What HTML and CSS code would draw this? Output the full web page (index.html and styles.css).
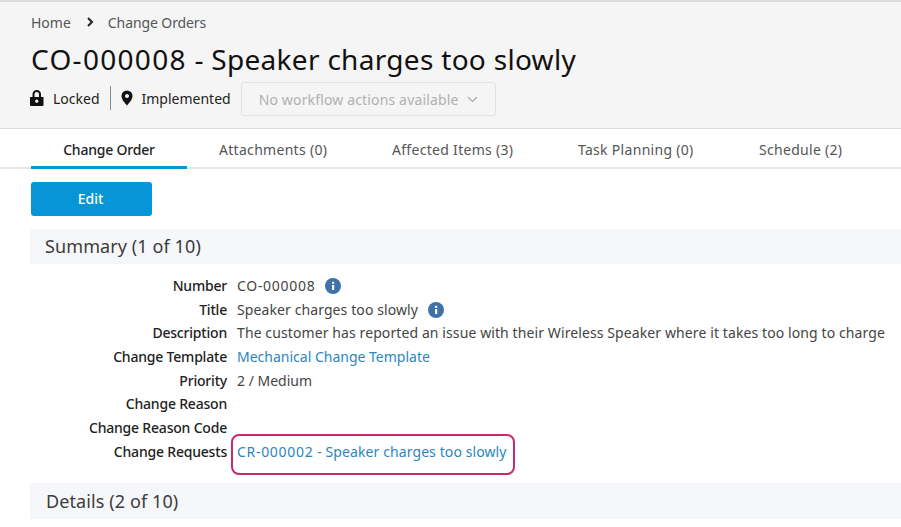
FILE: index.html
```html
<!DOCTYPE html>
<html lang="en">
<head>
<meta charset="utf-8">
<title>CO-000008 - Speaker charges too slowly</title>
<link rel="stylesheet" href="styles.css">
</head>
<body>
<header class="head">
  <nav class="crumbs">
    <span>Home</span>
    <svg class="crumb-sep" width="8" height="10" viewBox="0 0 8 10"><path d="M2 1l4 4-4 4" fill="none" stroke="#222" stroke-width="2"/></svg>
    <span class="crumb-last">Change Orders</span>
  </nav>
  <h1 class="title"><span class="title-id">CO-000008</span> - Speaker charges too slowly</h1>
  <div class="status">
    <svg class="st-icon" width="14" height="16" viewBox="0 0 14 16"><path d="M0 7h13.500v8a1 1 0 0 1-1 1H1a1 1 0 0 1-1-1z" fill="#111"/><path d="M3.500 7.500V4.300a3.250 3.250 0 0 1 6.500 0v3.200" fill="none" stroke="#111" stroke-width="2"/><circle cx="6.750" cy="11.200" r="1.600" fill="#f5f5f5"/></svg>
    <span class="st-text">Locked</span>
    <span class="st-div"></span>
    <svg class="st-icon" width="12" height="16" viewBox="0 0 12 16"><path fill-rule="evenodd" d="M6 .5a5.500 5.500 0 0 1 5.500 5.500c0 3.500-3.500 7-5.500 9.500C4 13 .5 9.500.5 6A5.500 5.500 0 0 1 6 .5zm0 3.500a2 2 0 1 0 0 4 2 2 0 0 0 0-4z" fill="#111"/></svg>
    <span class="st-text">Implemented</span>
    <button class="wf" disabled>No workflow actions available
      <svg width="11" height="7" viewBox="0 0 11 7"><path d="M1 1l4.500 4.500L10 1" fill="none" stroke="#b5b5b5" stroke-width="1.500"/></svg>
    </button>
  </div>
</header>
<div class="tabs">
  <span class="tab active">Change Order</span>
  <span class="tab">Attachments (0)</span>
  <span class="tab">Affected Items (3)</span>
  <span class="tab">Task Planning (0)</span>
  <span class="tab">Schedule (2)</span>
</div>
<main class="body">
  <button class="edit">Edit</button>
  <h2 class="section">Summary (1 of 10)</h2>
  <dl class="fields">
    <dt>Number</dt><dd><span class="code">CO-000008</span> <svg class="info" width="16" height="16" viewBox="0 0 16 16"><circle cx="8" cy="8" r="8" fill="#3f72a8"/><rect x="7" y="7" width="2.200" height="5" fill="#fff"/><rect x="7" y="3.800" width="2.200" height="2" fill="#fff"/></svg></dd>
    <dt>Title</dt><dd>Speaker charges too slowly <svg class="info" width="16" height="16" viewBox="0 0 16 16"><circle cx="8" cy="8" r="8" fill="#3f72a8"/><rect x="7" y="7" width="2.200" height="5" fill="#fff"/><rect x="7" y="3.800" width="2.200" height="2" fill="#fff"/></svg></dd>
    <dt>Description</dt><dd>The customer has reported an issue with their Wireless Speaker where it takes too long to charge</dd>
    <dt>Change Template</dt><dd class="tight"><a class="link">Mechanical Change Template</a></dd>
    <dt>Priority</dt><dd class="tight">2 / Medium</dd>
    <dt>Change Reason</dt><dd></dd>
    <dt>Change Reason Code</dt><dd></dd>
    <dt>Change Requests</dt><dd class="highlighted"><a class="link"><span class="code">CR-000002</span> - Speaker charges too slowly</a></dd>
  </dl>
  <h2 class="section details">Details (2 of 10)</h2>
</main>
</body>
</html>
```
FILE: styles.css
```css
* { box-sizing: border-box; }
html, body { margin: 0; padding: 0; background: #fff; }
body { font-family: "Noto Sans", sans-serif; color: #3c3c3c; width: 901px; height: 527px; overflow: hidden; }
.head { background: #f5f5f5; border-top: 2px solid #dcdcdc; border-bottom: 1px solid #dcdcdc; height: 129px; padding: 0 0 0 30px; }
.crumbs { display: flex; align-items: center; height: 20px; margin: 10px 0 0 1px; font-size: 14px; color: #555; }
.crumb-sep { margin: 0 14px 0 15px; }
.crumb-last { letter-spacing: -0.1px; }
.title { margin: 5px 0 0 1px; font-size: 28px; font-weight: 400; line-height: 44px; color: #111; letter-spacing: 0.3px; }
.title-id { letter-spacing: 1.300px; }
.status { display: flex; align-items: center; height: 34px; font-size: 14px; color: #222; }
.st-text { white-space: nowrap; }
.st-icon { margin-right: 9px; }
.st-div { width: 1px; height: 24px; background: #8a8a8a; margin: 0 10px; }
.wf { display: flex; align-items: center; justify-content: space-between; width: 255px; height: 34px; margin: 2px 0 0 10px; padding: 0 17px; background: #f5f5f5; border: 1px solid #e2e2e2; border-radius: 3px; font: 14px "Noto Sans", sans-serif; letter-spacing: 0.15px; color: #b0b0b0; }
.tabs { display: flex; height: 40px; border-bottom: 2px solid #e6e6e6; padding-left: 31px; font-size: 14px; letter-spacing: 0.3px; color: #555; }
.tab { height: 40px; line-height: 42px; text-align: left; white-space: nowrap; }
.tab:nth-child(1) { width: 156px; text-align: center; }
.tab:nth-child(2) { width: 205px; padding-left: 32px; }
.tab:nth-child(3) { width: 186px; }
.tab:nth-child(4) { width: 181px; }
.tab.active { color: #222; font-weight: 500; letter-spacing: -0.2px; border-bottom: 3px solid #0696d7; }
.body { padding: 13px 0 0 30px; }
.edit { display: block; width: 121px; height: 34px; margin-left: 1px; padding: 0 2px 2px 0; background: #0696d7; border: 0; border-radius: 3px; color: #fff; font: 500 14px "Noto Sans", sans-serif; }
.section { margin: 13px 0 0; height: 35px; background: #f5f7fa; padding-left: 15px; font-size: 18px; font-weight: 400; line-height: 35px; letter-spacing: 0.1px; color: #3c3c3c; }
.fields { display: grid; grid-template-columns: 197px 1fr; column-gap: 10px; grid-auto-rows: 23.7px; margin: 10px 0 0; font-size: 14px; line-height: 23.7px; }
dt { text-align: right; color: #222; white-space: nowrap; letter-spacing: -0.2px; font-weight: 500; }
dd { margin: 0; color: #444; white-space: nowrap; letter-spacing: 0.1px; }
dd.tight { letter-spacing: 0; }
.code { letter-spacing: 0.7px; }
.info { vertical-align: -3px; margin-left: 6px; }
.link { color: #2b86bd; }
.highlighted { position: relative; }
.highlighted::after { content: ""; box-sizing: border-box; position: absolute; left: -6px; top: -6px; width: 284px; height: 41px; border: 2px solid #c9296f; border-radius: 8px; }
.details { margin-top: 19px; height: 36px; line-height: 37px; padding-left: 16px; }
```
